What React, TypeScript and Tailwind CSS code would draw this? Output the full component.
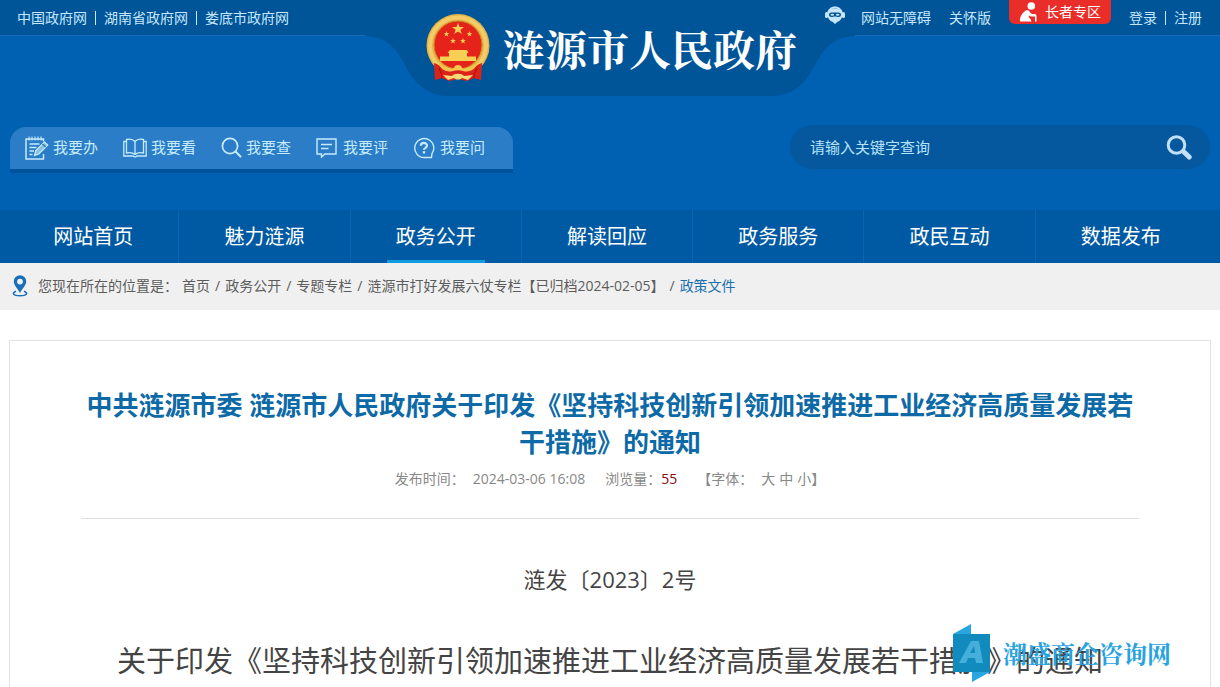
import type { ReactNode } from "react";

const siteLinks = ["中国政府网", "湖南省政府网", "娄底市政府网"];
const navItems = ["网站首页", "魅力涟源", "政务公开", "解读回应", "政务服务", "政民互动", "数据发布"];
const crumbs = ["首页", "政务公开", "专题专栏", "涟源市打好发展六仗专栏【已归档2024-02-05】"];
const activeNav = "政务公开";

const services: { label: string; icon: ReactNode }[] = [
  { label: "我要办", icon: <NoteIcon /> },
  { label: "我要看", icon: <BookIcon /> },
  { label: "我要查", icon: <FindIcon /> },
  { label: "我要评", icon: <CommentIcon /> },
  { label: "我要问", icon: <QuestionIcon /> },
];

function NoteIcon() {
  return (
    <svg width="24" height="24" viewBox="0 0 24 24" fill="none" stroke="currentColor" strokeWidth="1.5">
      <path d="M18.500 5.500V3H1v20h17.500v-5" />
      <path d="M4 .5v4M7 .5v4M10 .5v4M13 .5v4M16 .5v4" strokeWidth="1.1" />
      <path d="M4.500 8h10M4.500 11.500h7M4.500 15h4.500M4.500 18.500h3" />
      <path d="m9.500 19.500 1.300-5 8.700-8.500 3.300 3-9 9z" fill="currentColor" fillOpacity=".6" strokeWidth="1.2" />
      <path d="m17.500 8 3.300 3" stroke="#2b7dc8" />
    </svg>
  );
}

function BookIcon() {
  return (
    <svg width="24" height="20" viewBox="0 0 24 20" fill="none" stroke="currentColor" strokeWidth="1.3">
      <path d="M12 3.500C10 1.200 6 .8 3.500 1.500v13.500c3-.7 6.500-.3 8.500 1.500 2-1.800 5.500-2.200 8.500-1.500V1.500C18 .8 14 1.200 12 3.500zM12 3.500v13" />
      <path d="M3.500 3.500H.8V18H10c1 1 3 1 4 0h9.200V3.500h-2.700" />
    </svg>
  );
}

function FindIcon() {
  return (
    <svg width="21" height="21" viewBox="0 0 21 21" fill="none" stroke="currentColor" strokeWidth="1.7">
      <circle cx="9" cy="9" r="7.600" />
      <path d="m14.500 14.500 5 5" strokeWidth="2" strokeLinecap="round" />
    </svg>
  );
}

function CommentIcon() {
  return (
    <svg width="23" height="20" viewBox="0 0 23 20" fill="none" stroke="currentColor" strokeWidth="1.4">
      <path d="M1 1h19v15H9l-3.500 3V16H1z" />
      <path d="M5 6.500h11M5 10.500h7.500" />
    </svg>
  );
}

function QuestionIcon() {
  return (
    <svg width="23" height="22" viewBox="0 0 23 22" fill="none" stroke="currentColor" strokeWidth="1.4">
      <path d="M11 20.500H18.500L19 16.500A9.500 9.500 0 1 0 11 20.500z" />
      <path d="M7.800 8.800C7.900 4.900 14 5 14 8.600c0 2.400-3 2.500-3 4.200" strokeWidth="2.200" />
      <path d="M11 14.200v2.300" strokeWidth="2.400" />
    </svg>
  );
}

function RobotIcon() {
  return (
    <svg width="20" height="20" viewBox="0 0 20 20" fill="currentColor">
      <path d="M2 8C2.500 3 6 .5 10 .5S17.500 3 18 8h-1.500C15.500 4.500 13 2.500 10 2.500S4.500 4.500 3.500 8z" />
      <rect x="0" y="6" width="3" height="6" rx="1.500" />
      <rect x="17" y="6" width="3" height="6" rx="1.500" />
      <path
        fillRule="evenodd"
        d="M10 2.500c4.500 0 7.300 2.800 7.300 6.500 0 3.500-2.300 6.300-4.800 6.800L10 18l-2.500-2.200C5 15.300 2.700 12.500 2.700 9c0-3.700 2.800-6.500 7.300-6.500zM6.500 6.500C5 6.500 4 7.400 4 8.700S5 11 6.500 11c1.600 0 2-.5 3.500-.5s1.900.5 3.500.5C15 11 16 10 16 8.700s-1-2.200-2.500-2.200z"
      />
      <ellipse cx="7.300" cy="8.700" rx="1.800" ry="1" />
      <ellipse cx="12.700" cy="8.700" rx="1.800" ry="1" />
    </svg>
  );
}

function ElderIcon() {
  return (
    <svg width="18" height="20" viewBox="0 0 18 20" fill="#fff">
      <circle cx="12.300" cy="4" r="3.800" />
      <path d="M1 19.500c-.5-5 2.500-9.500 7-11.500l2 .8c1 1.500 1.500 2.500 3 3.200h2.500c1.500 0 2 .8 2 2v5.500H16v-5h-3.500c-1 0-2-.4-2.700-1.100v1.800c1.500 1.300 2.200 2.300 2.700 4.300z" />
    </svg>
  );
}

function PinIcon() {
  return (
    <svg width="16" height="22" viewBox="0 0 16 22">
      <path
        fill="#1a6fb9"
        fillRule="evenodd"
        d="M8 .3a6.200 6.200 0 0 1 6.200 6.200c0 4-3.700 6.500-6.200 11.500C5.500 13 1.800 10.500 1.800 6.500A6.200 6.200 0 0 1 8 .3zm0 3.400a2.900 2.900 0 1 0 0 5.800 2.900 2.900 0 0 0 0-5.800z"
      />
      <path d="M4 16.300c-4.500 1.600-3.200 4.500 4 4.500s8.500-2.900 4-4.500" fill="none" stroke="#1a6fb9" strokeWidth="1.600" />
    </svg>
  );
}

const star = "M0-5 1.200-1.600 4.800-1.600 1.900.6 3 4 0 2-3 4-1.900.6-4.800-1.600-1.200-1.600z";

function Emblem() {
  return (
    <svg width="64" height="68" viewBox="0 0 64 68" className="shrink-0">
      <circle cx="32" cy="31.500" r="31.500" fill="#e6b347" />
      <circle cx="32" cy="31.500" r="28" fill="none" stroke="#f3cc67" strokeWidth="4" />
      <circle cx="32" cy="31" r="24" fill="#e5231b" stroke="#c98a22" strokeWidth="1" />
      <g fill="#f7cf55">
        <path d={star} transform="translate(32 15) scale(1.250)" />
        <path d={star} transform="translate(20.500 20) scale(.6)" />
        <path d={star} transform="translate(43.500 20) scale(.6)" />
        <path d={star} transform="translate(27 27) scale(.6)" />
        <path d={star} transform="translate(37 27) scale(.6)" />
        <path d="M24 36h17l1.500 3H41v3.500h9V47H14v-4.500h9V39h-1.500z" />
      </g>
      <path
        d="M8 49c4 1 6 3 9 5h30c3-2 5-4 9-5l-1 17-7-2-7 3-9-2-9 2-7-3-7 2z"
        fill="#dd2219"
      />
      <path
        d="M12 48c5 5 10 7 16 6 0-4 8-4 8 0 6 1 11-1 16-6-2 7-8 11-15 9-3-1-7-1-10 0-7 2-13-2-15-9z"
        fill="#f3c64f"
      />
      <path d="m17 61 9 1c2-3 10-3 12 0l9-1-5 5-6-2c-2 2-6 2-8 0l-6 2z" fill="#f8d978" />
      <path d="M13 54c2 4 3 7 3 10M51 54c-2 4-3 7-3 10" fill="none" stroke="#a81712" strokeWidth="1.200" />
    </svg>
  );
}

function TopBar() {
  return (
    <div className="grid grid-cols-[1fr_400px_1fr] items-start text-sm text-[#c6e7fb]">
      <nav className="flex h-9 items-center border-b border-[#1a6cb8] bg-[#005498] pl-[17px]">
        {siteLinks.map((link, i) => (
          <span key={link} className="flex items-center whitespace-nowrap">
            {i > 0 && <span className="mx-2 h-[14px] w-px bg-[#c6e7fb]" />}
            <a href="#">{link}</a>
          </span>
        ))}
      </nav>

      <div className="relative flex h-24 items-start pt-[14px] pl-4">
        {/* curved tab hanging below the strip, wider than the column */}
        <svg className="absolute top-0 -left-[45px]" width="490" height="96" viewBox="0 0 490 96">
          <path
            d="M0 36C22 37 31 48 40 65 49 83 62 96 84 96H406C428 96 441 83 450 65 459 48 468 37 490 36V0H0z"
            fill="#005498"
          />
        </svg>
        <a href="#" className="relative flex items-center gap-[13px]">
          <Emblem />
          <h1 className="font-['Noto_Serif_CJK_SC','Noto_Sans_CJK_SC',serif] text-[42px] leading-[68px] font-bold whitespace-nowrap text-white">
            涟源市人民政府
          </h1>
        </a>
      </div>

      <div className="h-9 border-b border-[#1a6cb8] bg-[#005498]">
        <div className="relative flex h-9 items-center justify-end pr-[18px] whitespace-nowrap">
          <a href="#" aria-label="智能问答" className="mr-4 pb-1">
            <RobotIcon />
          </a>
          <a href="#" className="mr-[18px]">网站无障碍</a>
          <a href="#" className="mr-[18px]">关怀版</a>
          <a
            href="#"
            className="mr-[18px] flex h-6 items-center gap-2 self-start rounded-b-md bg-[#e92e2a] px-[10px] text-white"
          >
            <ElderIcon />
            长者专区
          </a>
          <a href="#">登录</a>
          <span className="mx-2 h-[14px] w-px bg-[#c6e7fb]" />
          <a href="#">注册</a>
        </div>
      </div>
    </div>
  );
}

function ServiceRow() {
  return (
    <div className="mt-[29px] flex items-end justify-between px-[10px]">
      <nav className="flex h-[42px] items-center gap-[25px] rounded-t-2xl bg-[#2b7dc8] pr-7 pb-px pl-[15px] text-[15px] text-[#c6ecfb] shadow-[0_4px_0_#00529a]">
        {services.map((s) => (
          <a key={s.label} href="#" className="flex items-center gap-1 whitespace-nowrap">
            {s.icon}
            {s.label}
          </a>
        ))}
      </nav>
      <form className="flex h-11 w-[420px] items-center rounded-full bg-[#05589e] pr-[18px] pl-5">
        <input
          type="text"
          aria-label="站内搜索"
          placeholder="请输入关键字查询"
          className="min-w-0 flex-1 bg-transparent text-[15px] text-white outline-none placeholder:text-[#b5e3fa]"
        />
        <button type="button" aria-label="搜索">
          <svg width="26" height="25" viewBox="0 0 26 25" fill="none" stroke="#c3dff5">
            <circle cx="10.500" cy="10" r="8.300" strokeWidth="3" />
            <path d="m16.500 16 2.500 2.500" strokeWidth="3" />
            <path d="m18.500 17.500 4.700 4.500" strokeWidth="5" strokeLinecap="round" />
          </svg>
        </button>
      </form>
    </div>
  );
}

function MainNav() {
  return (
    <nav className="mt-[41px] flex bg-[#005aa3] pr-[14px] pl-2 text-xl text-white">
      {navItems.map((item) => (
        <a
          key={item}
          href="#"
          className="flex h-[53px] flex-1 justify-center border-r border-[#0a65b2] whitespace-nowrap last:border-r-0"
        >
          <span
            className={
              item === activeNav ? "border-b-[3px] border-[#119be0] px-[9px] leading-[53px]" : "leading-[53px]"
            }
          >
            {item}
          </span>
        </a>
      ))}
    </nav>
  );
}

function Breadcrumb() {
  return (
    <div className="flex h-[47px] items-center bg-[#f0f0f0] pb-px pl-3 text-sm whitespace-nowrap text-[#5c5c5c]">
      <PinIcon />
      <span className="mr-1 ml-[10px]">您现在所在的位置是：</span>
      {crumbs.map((crumb) => (
        <span key={crumb}>
          <a href="#">{crumb}</a>
          <span className="mx-[5px]">/</span>
        </span>
      ))}
      <a href="#" className="text-[#1a6fb0]">政策文件</a>
    </div>
  );
}

function Watermark() {
  return (
    <div className="absolute top-[-18px] -right-8 flex items-center gap-3 text-[#29a3df]">
      <svg width="39" height="60" viewBox="0 0 39 60">
        <path d="M1 11 19 1v11h19v37L20 59V49H1z" fill="#29a6e1" />
        <path d="M1 11h37v38H1z" fill="#118bbd" />
        <path d="M7 40 19 18h8l4 22h-7l-1-5h-7l-2 5zm11-10h5l-1-7z" fill="#45aedb" fillRule="evenodd" />
      </svg>
      <span className="font-['Noto_Serif_CJK_SC','Noto_Sans_CJK_SC',serif] text-2xl font-bold whitespace-nowrap">
        潮盛商企咨询网
      </span>
    </div>
  );
}

function Article() {
  return (
    <article className="mx-[9px] mt-[30px] flex-1 border border-b-0 border-[#e3e3e3] px-[71px] pt-[46px] pb-[10px] text-center">
      <h2 className="text-[26px] leading-[37px] font-bold text-[#0d6aa6]">
        中共涟源市委 涟源市人民政府关于印发《坚持科技创新引领加速推进工业经济高质量发展若干措施》的通知
      </h2>
      <div className="flex h-[58px] items-start justify-center gap-5 border-b border-[#dedede] pt-2 text-sm leading-5 text-[#888]">
        <span className="flex gap-2">
          <span>发布时间：</span>
          <time>2024-03-06 16:08</time>
        </span>
        <span>
          浏览量：<span className="text-[#8b0a0a]">55</span>
        </span>
        <span className="flex items-start gap-1">
          <span className="mr-1">【字体：</span>
          <button type="button">大</button>
          <button type="button">中</button>
          <span className="flex">
            <button type="button">小</button>】
          </span>
        </span>
      </div>
      <p className="mt-[44px] text-[22px] leading-8 text-[#444]">涟发〔2023〕2号</p>
      <div className="relative mt-[46px]">
        <p className="text-[29px] leading-10 whitespace-nowrap text-[#444]">
          关于印发《坚持科技创新引领加速推进工业经济高质量发展若干措施》的通知
        </p>
        <Watermark />
      </div>
    </article>
  );
}

export default function App() {
  return (
    <div
      lang="zh-CN"
      className="flex min-h-screen flex-col bg-white font-['Open_Sans','Noto_Sans_CJK_SC',sans-serif]"
    >
      <header className="bg-[#0061b2]">
        <TopBar />
        <ServiceRow />
        <MainNav />
      </header>
      <Breadcrumb />
      <Article />
    </div>
  );
}
